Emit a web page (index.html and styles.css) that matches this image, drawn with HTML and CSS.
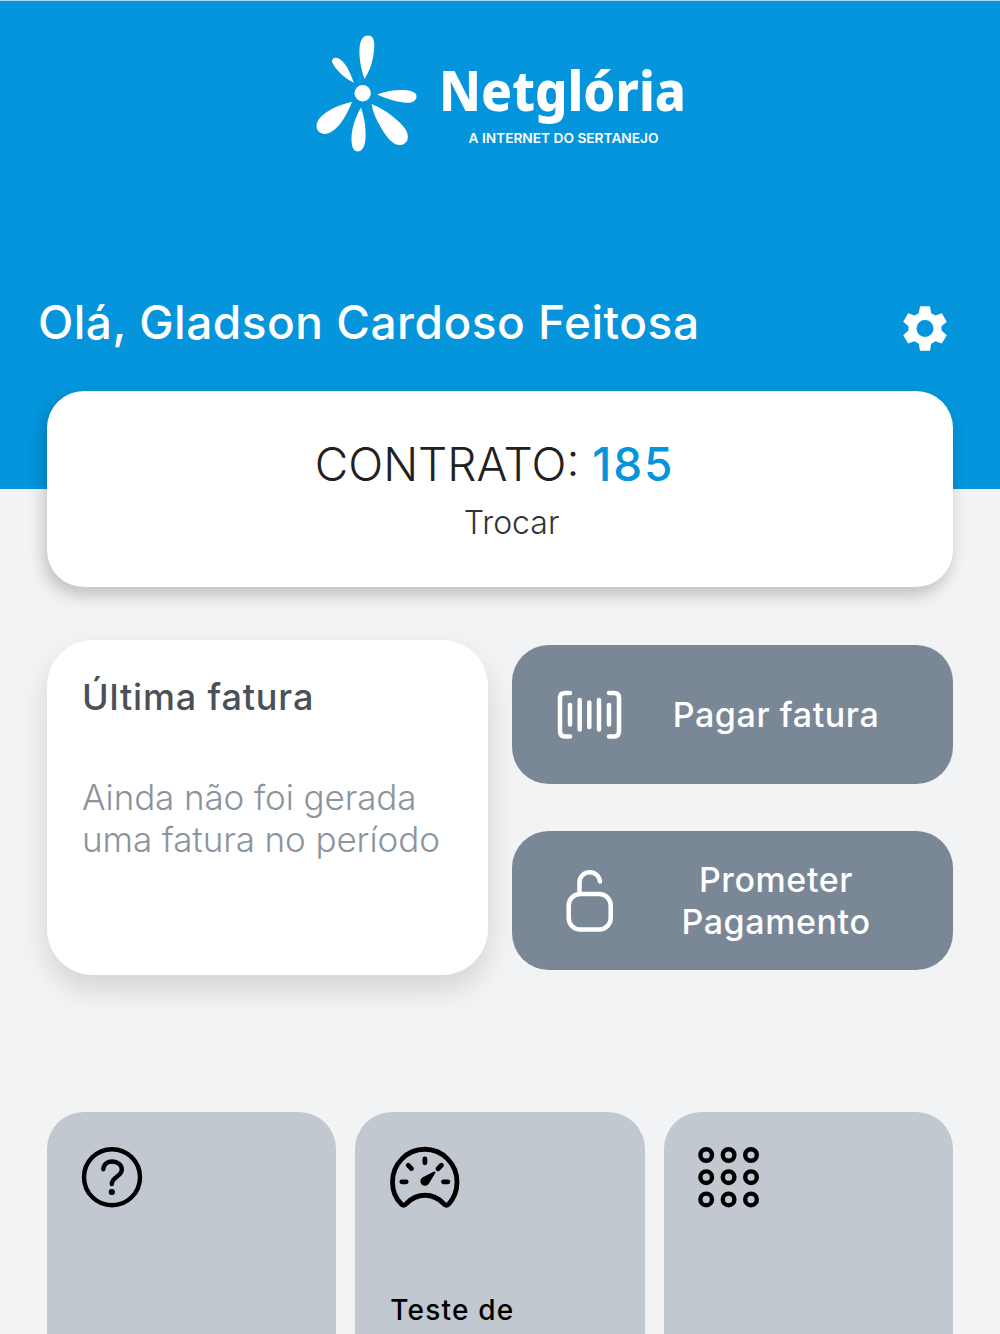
FILE: index.html
```html
<!DOCTYPE html>
<html lang="pt-BR">
<head>
    <meta charset="UTF-8">
    <title>Netglória</title>
    <link rel="stylesheet" href="styles.css">
</head>
<body>
    <header class="header">
        <svg class="logo" width="400" height="150" viewBox="0 0 400 150" fill="#fff">
            <circle cx="62.7" cy="73.3" r="8.2"/>
            <path d="M64.5 59 C61 49 59 38 59.5 29 C60 20 63 15.5 68 15.5 C73 15.5 75 20 74 30 C73 42 70 50 64.5 59Z"/>
            <path d="M53.8 62.8 C44 58 35 49 32.3 42.5 C31 38 36 36 41 40 C46 44 50 52 53.8 62.8Z"/>
            <path d="M77 74.5 C87 70.5 96 69.5 104 70 C113 70.5 117 73 116.5 77 C116 82 110 83.5 104 82.5 C95 81.5 87 79 77 74.5Z"/>
            <path d="M52 82 C40 84 25 91 19 99 C14 106 17 113 24 114 C36 114 46 97 52 82Z"/>
            <path d="M61 87.5 C55 98 51 110 51.5 121 C52 128 54 131.5 58 131.5 C63 131 65 125 65.5 118 C66 106 64 97 61 87.5Z"/>
            <path d="M71.5 84 C85 89 100 101 106 110 C110 118 107 124 101 125 C94 126 88 119 83 111 C77 101 73 93 71.5 84Z"/>
            <text class="logo-name" x="139" y="90.5" textLength="247" lengthAdjust="spacingAndGlyphs">Netglória</text>
            <text class="logo-slogan" x="168.5" y="122.5" textLength="190" lengthAdjust="spacingAndGlyphs">A INTERNET DO SERTANEJO</text>
        </svg>
        <div class="greeting">
            <h1>Olá, Gladson Cardoso Feitosa</h1>
            <svg class="settings" width="54" height="54" viewBox="0 0 54 54" fill="#fff">
                <path fill-rule="evenodd" d="M22 5.2H32L33.2 12.2L37.5 14.6L43.8 12.2L48.8 20.8L43.5 25.2V29.5L48.8 34.2L43.8 42.6L37.5 40.3L33.2 42.7L32 49.7H22L20.8 42.7L16.5 40.3L10.2 42.6L5.2 34.2L10.5 29.5V25.2L5.2 20.8L10.2 12.2L16.5 14.6L20.8 12.2ZM27 19A8.5 8.5 0 1 0 27 36A8.5 8.5 0 1 0 27 19Z"/>
            </svg>
        </div>
    </header>

    <main class="content">
        <section class="contract">
            <p class="contract-number">CONTRATO: <b>185</b></p>
            <a class="contract-change">Trocar</a>
        </section>

        <section class="billing">
            <div class="invoice">
                <h2>Última fatura</h2>
                <p>Ainda não foi gerada<br>uma fatura no período</p>
            </div>
            <div class="actions">
                <div class="action">
                    <svg width="100" height="90" viewBox="0 0 100 90" fill="none" stroke="#fff" stroke-width="4.5" stroke-linecap="round" stroke-linejoin="round">
                        <path d="M30 23H25Q20 23 20 28V61Q20 66.5 25 66.5H30M69 23H74Q79 23 79 28V61Q79 66.5 74 66.5H69"/>
                        <path d="M30 35V54.5M39.7 30V59.5M49.3 32.5V57M59 30V59.5M69 35V54.5"/>
                    </svg>
                    <span>Pagar fatura</span>
                </div>
                <div class="action">
                    <svg width="100" height="100" viewBox="0 1 100 100" fill="none" stroke="#fff" stroke-width="4.5" stroke-linecap="round" stroke-linejoin="round">
                        <rect x="28.7" y="44" width="42" height="35.5" rx="11.5"/>
                        <path d="M39.5 43V31.5A10.3 10.3 0 0 1 60 31.5"/>
                    </svg>
                    <span>Prometer<br>Pagamento</span>
                </div>
            </div>
        </section>

        <section class="shortcuts">
            <div class="shortcut">
                <svg width="100" height="100" viewBox="1.7 0 100 100" fill="none" stroke="#000" stroke-width="4.4" stroke-linecap="round">
                    <circle cx="51.7" cy="47.2" r="28"/>
                    <path d="M43 39.2C43.3 34 47 31.5 52 31.5C57.5 31.5 61.5 35 61.5 39.5C61.5 47 51.5 46.5 51.5 54"/>
                    <circle cx="51.5" cy="62" r="3.1" fill="#000" stroke="none"/>
                </svg>
            </div>
            <div class="shortcut">
                <svg width="110" height="100" viewBox="0 0 110 100" fill="none" stroke="#000" stroke-width="4.8" stroke-linecap="round" stroke-linejoin="round">
                    <path d="M31.5 74.3C26 69 22.5 61 22.5 52A32.2 32.7 0 0 1 87 52C87 61 83.5 69 78.5 74.3Q76 76.5 73.5 73.5C63 62.5 47 62.5 36.5 73.5Q34 76.5 31.5 74.3Z"/>
                    <path d="M31.8 51.8H36.2M73.5 51.8H77.9M54.9 29V32.8M38.3 35.3L41.5 38.6M71.4 35.3L68 38.7"/>
                    <path d="M64.5 42.5L57.8 53.5Q55 56 52.3 53.8Q50.3 51 52.8 48.5Z" fill="#000" stroke-width="2"/>
                </svg>
                <span>Teste de</span>
            </div>
            <div class="shortcut">
                <svg width="100" height="100" viewBox="-1 0 100 100" fill="none" stroke="#000" stroke-width="4.4">
                    <circle cx="26.2" cy="25" r="5.8"/>
                    <circle cx="48.6" cy="25" r="5.8"/>
                    <circle cx="71" cy="25" r="5.8"/>
                    <circle cx="26.2" cy="47.2" r="5.8"/>
                    <circle cx="48.6" cy="47.2" r="5.8"/>
                    <circle cx="71" cy="47.2" r="5.8"/>
                    <circle cx="26.2" cy="69.4" r="5.8"/>
                    <circle cx="48.6" cy="69.4" r="5.8"/>
                    <circle cx="71" cy="69.4" r="5.8"/>
                </svg>
            </div>
        </section>
    </main>
</body>
</html>
```

FILE: styles.css
```css
* {
    box-sizing: border-box;
}

body {
    margin: 0;
    background-color: #f2f3f5;
    font-family: Inter, "Liberation Sans", sans-serif;
}

h1, h2, p {
    margin: 0;
}

svg {
    display: block;
    flex-shrink: 0;
}

.header {
    height: 489px;
    padding-top: 19px;
    background-color: #0495dc;
    border-top: 1px solid #a5d8f2;
    color: #fff;
}

.logo {
    margin: 0 auto;
    overflow: visible;
}

.logo-name {
    font-family: "Noto Sans", sans-serif;
    font-size: 56px;
    font-weight: 800;
}

.logo-slogan {
    font-size: 13px;
    font-weight: 600;
}

.greeting {
    display: flex;
    justify-content: space-between;
    padding: 122px 48px 0 38px;
}

.greeting h1 {
    padding-top: 2px;
    font-size: 46px;
    line-height: 56px;
    font-weight: 500;
    letter-spacing: 0.5px;
    white-space: nowrap;
}

.settings {
    margin-top: 9px;
}

.content {
    padding: 0 47px;
    margin-top: -98px;
}

.contract {
    height: 196px;
    padding-top: 45px;
    border-radius: 37px;
    background-color: #fff;
    box-shadow: -3px 8px 16px rgba(0, 0, 0, 0.21);
    text-align: center;
}

.contract-number {
    margin-right: 11px;
    font-size: 46px;
    line-height: 56px;
    font-weight: 300;
    color: #212121;
}

.contract-number b {
    font-weight: 500;
    letter-spacing: 1.8px;
    color: #0495dc;
}

.contract-change {
    display: block;
    margin-left: 23px;
    font-size: 32px;
    line-height: 62px;
    font-weight: 300;
    color: #333;
}

.billing {
    display: grid;
    grid-template-columns: 1fr 1fr;
    gap: 24px;
    margin-top: 53px;
}

.invoice {
    height: 335px;
    padding: 35px 35px 0;
    border-radius: 46px;
    background-color: #fff;
    box-shadow: 0 14px 28px rgba(0, 0, 0, 0.13);
}

.invoice h2 {
    font-size: 36px;
    line-height: 44px;
    font-weight: 500;
    letter-spacing: 0.85px;
    color: #495057;
}

.invoice p {
    margin-top: 57px;
    font-size: 35px;
    line-height: 42px;
    font-weight: 300;
    letter-spacing: -0.1px;
    color: #8b949e;
    white-space: nowrap;
}

.actions {
    display: flex;
    flex-direction: column;
    gap: 47px;
    padding-top: 5px;
}

.action {
    display: flex;
    align-items: center;
    height: 139px;
    padding: 0 41px 0 28px;
    border-radius: 37px;
    background-color: #7a8796;
    color: #fff;
}

.action span {
    flex: 1;
    font-size: 34px;
    line-height: 42px;
    font-weight: 500;
    letter-spacing: 0.6px;
    text-align: center;
    white-space: nowrap;
}

.shortcuts {
    display: grid;
    grid-template-columns: 1fr 1fr 1fr;
    gap: 19px;
    margin-top: 137px;
}

.shortcut {
    height: 222px;
    padding: 18px 15px 0;
    border-radius: 37px 37px 0 0;
    background-color: #c2c8d0;
}

.shortcut span {
    display: block;
    margin-top: 60px;
    padding-left: 20px;
    font-size: 28px;
    line-height: 40px;
    font-weight: 500;
    letter-spacing: 1.2px;
}
```
